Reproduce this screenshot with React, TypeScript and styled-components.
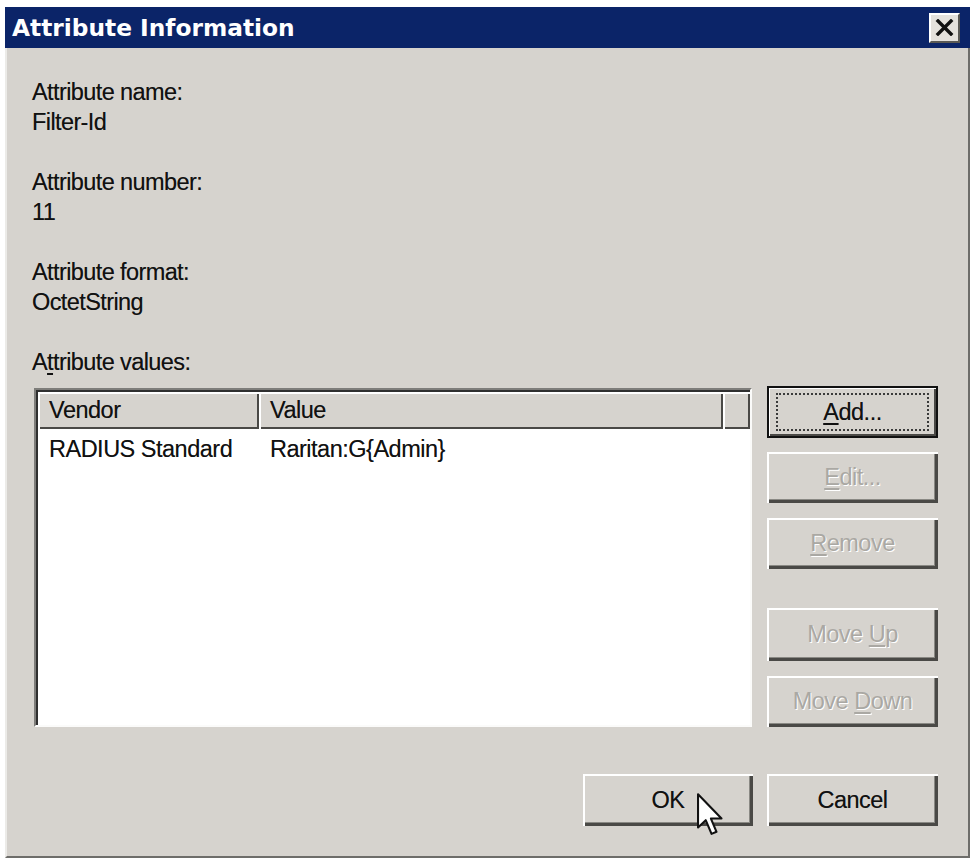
import React from "react";
import styled, { createGlobalStyle, css } from "styled-components";

const Global = createGlobalStyle`
  html, body { margin: 0; padding: 0; background: #ffffff; }
  body { width: 975px; height: 862px; overflow: hidden; }
  #root { width: 975px; height: 862px; }
`;

const Page = styled.div`
  width: 975px;
  height: 862px;
  padding: 7px 5px 4px 5px;
  box-sizing: border-box;
  background: #ffffff;
`;

const Window = styled.div`
  width: 965px;
  height: 851px;
  box-sizing: border-box;
  display: flex;
  flex-direction: column;
  background: #d6d3ce;
  border-left: 2px solid #ecebe8;
  border-right: 2px solid #6e6d6a;
  border-bottom: 2px solid #6e6d6a;
  font-family: "Liberation Sans", Arial, sans-serif;
  color: #111111;
  text-shadow: 0 0 0.5px rgba(0, 0, 0, 0.45);
`;

const TitleBar = styled.div`
  height: 41px;
  margin-left: -2px;
  margin-right: -2px;
  background: #0b2468;
  display: flex;
  align-items: center;
  justify-content: space-between;
  padding: 0 10px 0 7px;
`;

const Title = styled.div`
  font-family: "DejaVu Sans", Verdana, sans-serif;
  font-weight: bold;
  font-size: 23.3px;
  color: #ffffff;
  text-shadow: none;
`;

const CloseBtn = styled.div`
  width: 31px;
  height: 30px;
  box-sizing: border-box;
  background: #e4e1dc;
  border-top: 2px solid #ffffff;
  border-left: 2px solid #ffffff;
  border-right: 2px solid #5a5955;
  border-bottom: 2px solid #5a5955;
  display: flex;
  align-items: center;
  justify-content: center;
`;

const Body = styled.div`
  flex: 1;
  display: flex;
  flex-direction: column;
  padding: 29px 30px 0 25px;
`;

const Field = styled.div`
  display: flex;
  flex-direction: column;
  margin-bottom: 30px;
`;

const Line = styled.div`
  font-size: 23.5px;
  line-height: 30px;
  height: 30px;
  letter-spacing: -0.6px;
  white-space: nowrap;
`;

const ValuesLabel = styled(Line)`
  margin-bottom: 11px;
`;

const Mn = styled.span`
  text-decoration: underline;
  text-underline-offset: 3px;
  text-decoration-thickness: 2px;
`;

const MainRow = styled.div`
  display: flex;
  gap: 15px;
  padding-left: 2px;
`;

const ListBox = styled.div`
  width: 719px;
  height: 339px;
  box-sizing: border-box;
  background: #ffffff;
  border-style: solid;
  border-width: 2px;
  border-color: #7e7d7a #fbfbfa #fbfbfa #7e7d7a;
  box-shadow: inset 2px 2px 0 #2f2f2f;
  padding: 2px 0 0 2px;
  display: flex;
  flex-direction: column;
`;

const HeaderRow = styled.div`
  display: grid;
  grid-template-columns: 221px 464px 1fr;
  height: 37px;
`;

const HeaderCell = styled.div`
  background: #d6d3ce;
  box-sizing: border-box;
  box-shadow: inset 2px 2px 0 #ffffff, inset -2px -2px 0 #4a4946;
  padding-left: 11px;
  display: flex;
  align-items: center;
  font-size: 23.5px;
  letter-spacing: -0.5px;
  white-space: nowrap;
`;

const DataRow = styled.div`
  display: grid;
  grid-template-columns: 221px 464px 1fr;
  height: 40px;
  align-items: center;
`;

const DataCell = styled.div`
  padding-left: 11px;
  font-size: 23.5px;
  letter-spacing: -0.5px;
  white-space: nowrap;
`;

const ButtonColumn = styled.div`
  width: 171px;
  display: flex;
  flex-direction: column;
  margin-top: -2px;
`;

const buttonBase = css`
  box-sizing: border-box;
  background: #d6d3ce;
  border: none;
  font-family: "Liberation Sans", Arial, sans-serif;
  font-size: 23.5px;
  letter-spacing: -0.5px;
  display: flex;
  align-items: center;
  justify-content: center;
  position: relative;
  padding: 0;
`;

const Button = styled.div<{ $disabled?: boolean; $default?: boolean; $gap?: number; $w?: number; $h?: number }>`
  ${buttonBase};
  width: ${(p) => p.$w ?? 171}px;
  height: ${(p) => p.$h ?? 51}px;
  margin-top: ${(p) => p.$gap ?? 0}px;
  color: ${(p) => (p.$disabled ? "#aaa8a3" : "#111111")};
  text-shadow: ${(p) => (p.$disabled ? "1px 1px 0 #ffffff" : "0 0 0.5px rgba(0,0,0,0.45)")};
  box-shadow: ${(p) =>
    p.$default
      ? "inset 0 0 0 2px #111111, inset 3px 3px 0 #ffffff, inset -4px -4px 0 #4a4946"
      : "inset 2px 2px 0 #ffffff, inset -3px -3px 0 #4a4946, inset -4px -4px 0 #8a8984"};
`;

const FocusRect = styled.div`
  position: absolute;
  left: 9px;
  right: 9px;
  top: 7px;
  bottom: 7px;
  border: 2px dotted #3a3a3a;
  pointer-events: none;
`;

const Footer = styled.div`
  display: flex;
  justify-content: flex-end;
  gap: 14px;
  margin-top: 47px;
`;

const Cursor = styled.svg`
  position: absolute;
  left: 114px;
  top: 19px;
  width: 27px;
  height: 44px;
  overflow: visible;
`;

export default function App() {
  return (
    <>
      <Global />
      <Page>
        <Window>
          <TitleBar>
            <Title>Attribute Information</Title>
            <CloseBtn>
              <svg width="19" height="17" viewBox="0 0 19 17">
                <path d="M3 2 L16 15 M16 2 L3 15" stroke="#111" strokeWidth="3.4" strokeLinecap="square" />
              </svg>
            </CloseBtn>
          </TitleBar>
          <Body>
            <Field>
              <Line>Attribute name:</Line>
              <Line>Filter-Id</Line>
            </Field>
            <Field>
              <Line>Attribute number:</Line>
              <Line>11</Line>
            </Field>
            <Field>
              <Line>Attribute format:</Line>
              <Line>OctetString</Line>
            </Field>
            <ValuesLabel>
              A<Mn>t</Mn>tribute values:
            </ValuesLabel>
            <MainRow>
              <ListBox>
                <HeaderRow>
                  <HeaderCell>Vendor</HeaderCell>
                  <HeaderCell>Value</HeaderCell>
                  <HeaderCell />
                </HeaderRow>
                <DataRow>
                  <DataCell>RADIUS Standard</DataCell>
                  <DataCell>Raritan:G{"{"}Admin{"}"}</DataCell>
                  <div />
                </DataRow>
              </ListBox>
              <ButtonColumn>
                <Button $default $h={52}>
                  <FocusRect />
                  <span>
                    <Mn>A</Mn>dd...
                  </span>
                </Button>
                <Button $disabled $gap={14}>
                  <span>
                    <Mn>E</Mn>dit...
                  </span>
                </Button>
                <Button $disabled $gap={15}>
                  <span>
                    <Mn>R</Mn>emove
                  </span>
                </Button>
                <Button $disabled $gap={39} $h={53}>
                  <span>
                    Move <Mn>U</Mn>p
                  </span>
                </Button>
                <Button $disabled $gap={15}>
                  <span>
                    Move <Mn>D</Mn>own
                  </span>
                </Button>
              </ButtonColumn>
            </MainRow>
            <Footer>
              <Button $w={170} $h={52}>
                OK
                <Cursor viewBox="0 0 13 21">
                  <path
                    d="M0.5 0.5 L0.5 16.5 L4.2 13 L7 19.6 L9.4 18.6 L6.7 12.2 L11.8 12.2 Z"
                    fill="#ffffff"
                    stroke="#111111"
                    strokeWidth="1"
                    strokeLinejoin="round"
                  />
                </Cursor>
              </Button>
              <Button $w={171} $h={52}>
                Cancel
              </Button>
            </Footer>
          </Body>
        </Window>
      </Page>
    </>
  );
}
